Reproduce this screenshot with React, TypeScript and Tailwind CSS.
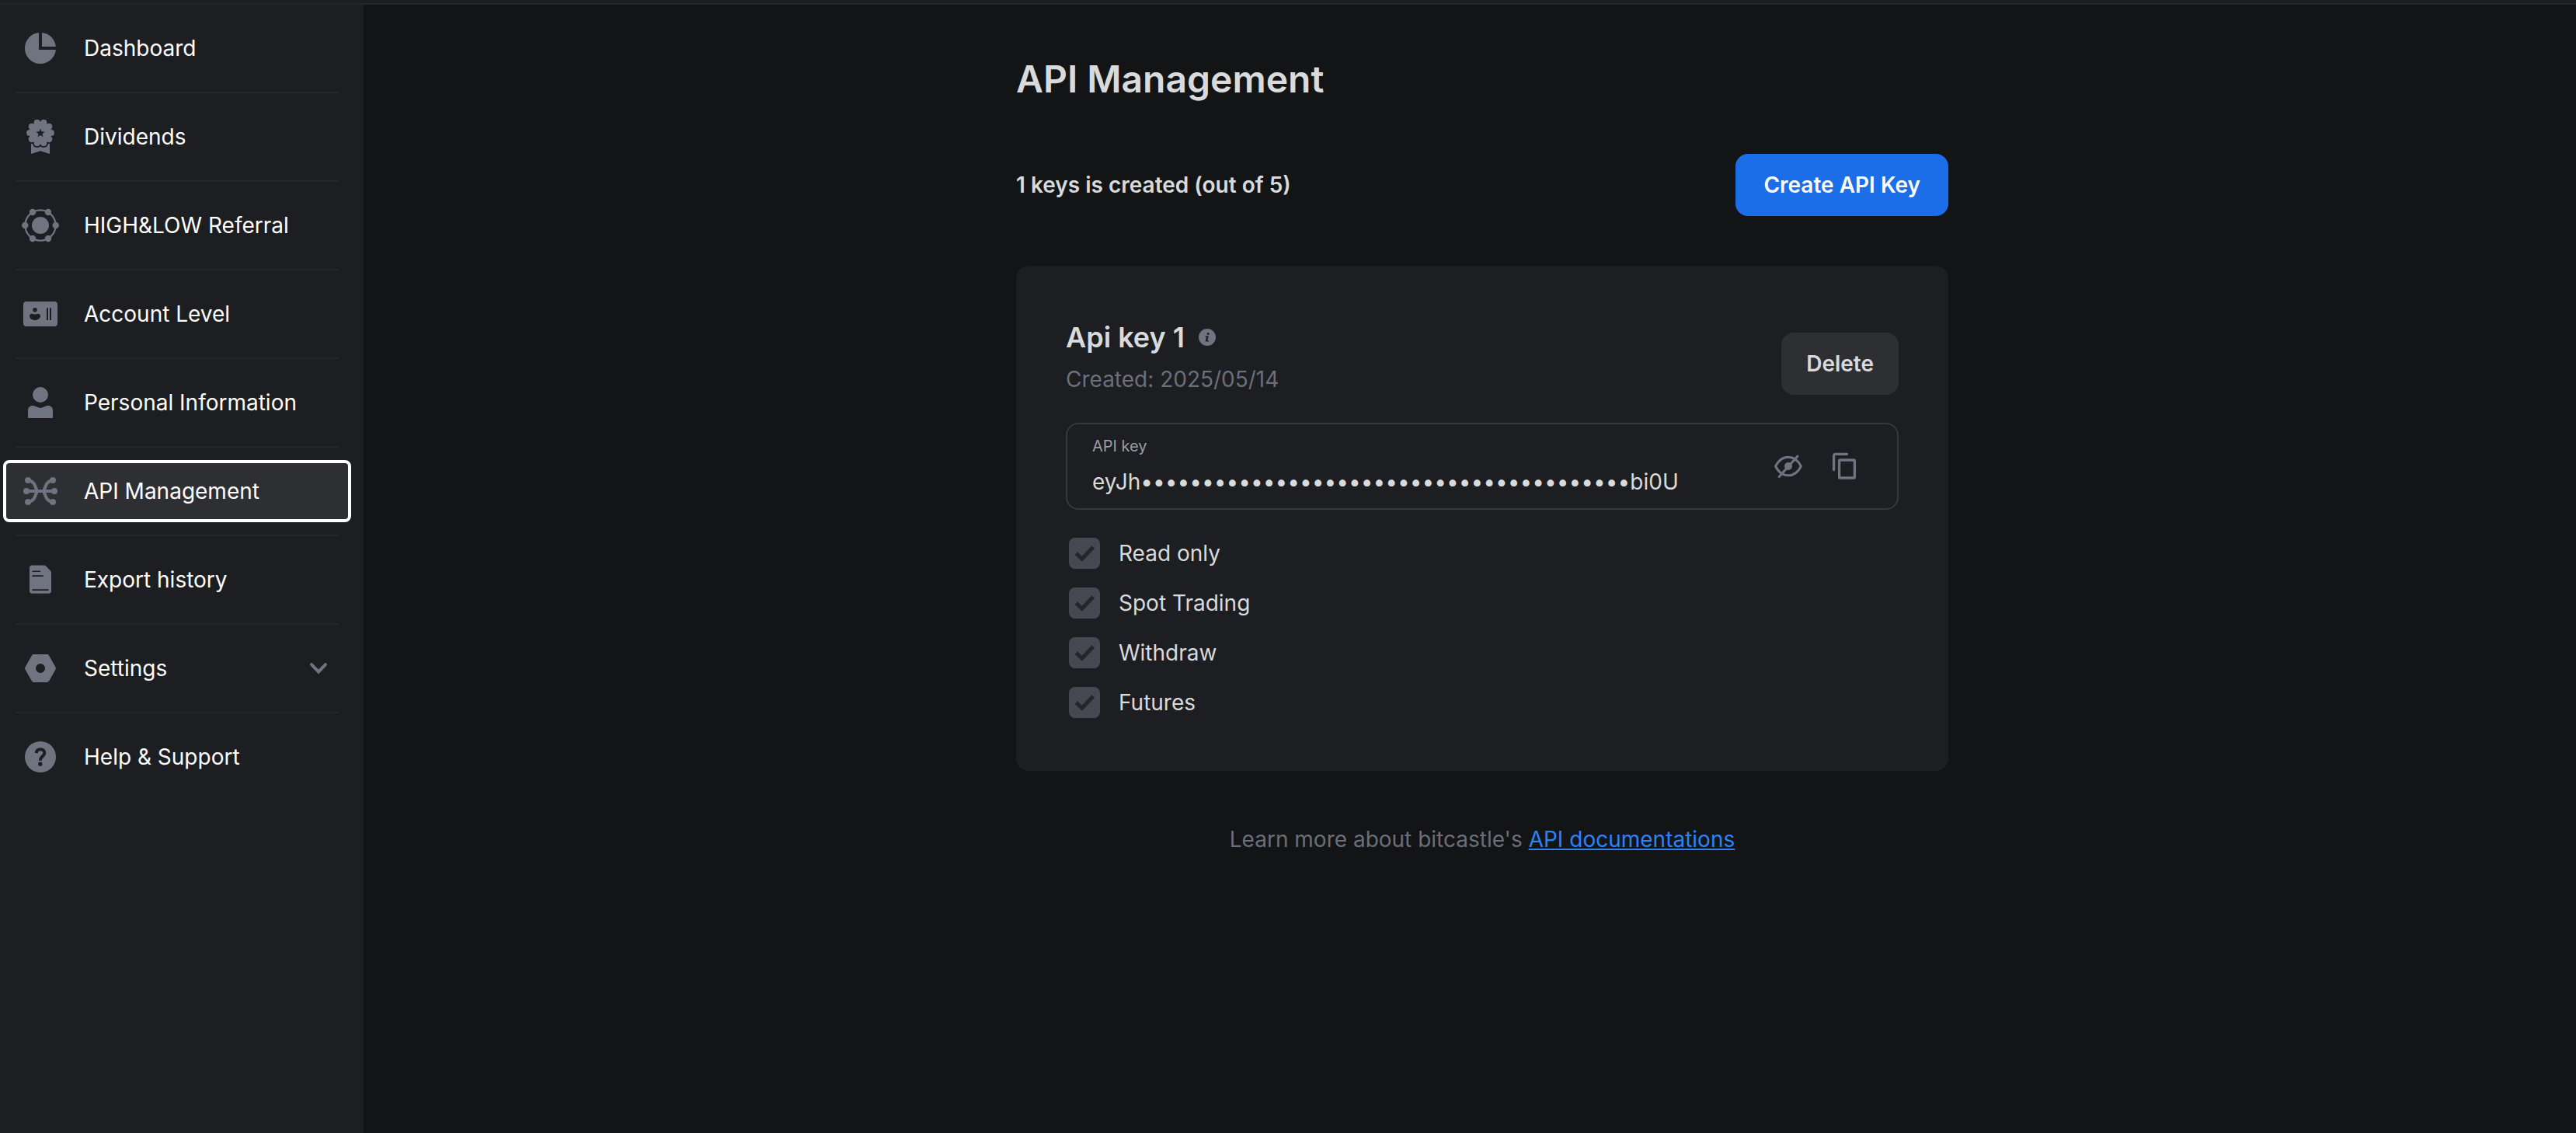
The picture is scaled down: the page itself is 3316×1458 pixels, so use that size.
import type { ReactNode } from "react";

function DashboardIcon() {
  return (
    <>
      <path d="M22 4.1A20 20 0 1 0 43.9 26H22Z" />
      <path d="M26 4.1A20 20 0 0 1 43.9 22H26Z" />
    </>
  );
}

const bumps = Array.from({ length: 10 }, (_, i) => {
  const a = (i * Math.PI) / 5;
  return { x: 24 + 13.8 * Math.cos(a), y: 19 + 13.8 * Math.sin(a) };
});

const star = Array.from({ length: 10 }, (_, i) => {
  const a = -Math.PI / 2 + (i * Math.PI) / 5;
  const r = i % 2 === 0 ? 6 : 2.6;
  return `${(24 + r * Math.cos(a)).toFixed(2)},${(19.4 + r * Math.sin(a)).toFixed(2)}`;
}).join(" ");

function DividendsIcon() {
  return (
    <>
      <path d="M12 32.7H36V46L24 42.3L12 46Z" />
      <g fill="#1d1e22">
        {bumps.map((b, i) => (
          <circle key={i} cx={b.x} cy={b.y} r="6" />
        ))}
      </g>
      <circle cx="24" cy="19" r="14.5" />
      {bumps.map((b, i) => (
        <circle key={i} cx={b.x} cy={b.y} r="4.1" />
      ))}
      <polygon points={star} fill="#1d1e22" />
    </>
  );
}

function ReferralIcon() {
  return (
    <>
      <circle cx="24" cy="24" r="19.6" fill="none" stroke="currentColor" strokeWidth="2.2" />
      <circle cx="24" cy="24" r="11" />
      <circle cx="4.3" cy="24" r="4.2" />
      <circle cx="43.7" cy="24" r="4.2" />
      <circle cx="14" cy="7" r="4.2" />
      <circle cx="34" cy="7" r="4.2" />
      <circle cx="14" cy="41" r="4.2" />
      <circle cx="34" cy="41" r="4.2" />
    </>
  );
}

function AccountIcon() {
  return (
    <>
      <rect x="2" y="8" width="44" height="32" rx="4" />
      <g fill="#1d1e22">
        <circle cx="17" cy="18.7" r="2.8" />
        <path d="M10 26.5C10 25 11.5 23.7 13 23.7C15.5 24.6 18.5 24.6 21 23.7C22.5 23.7 24 25 24 26.5C24 29.5 21 32 17 32S10 29.5 10 26.5Z" />
        <rect x="32" y="16.3" width="2" height="15.7" />
        <rect x="36" y="16.3" width="2" height="15.7" />
      </g>
    </>
  );
}

function PersonIcon() {
  return (
    <>
      <circle cx="24" cy="14" r="10" />
      <path d="M8 44V34C8 30.5 10.5 28 14 28C18 28 20.5 31 24 31S30 28 34 28C37.5 28 40 30.5 40 34V44Z" />
    </>
  );
}

function ApiIcon() {
  return (
    <>
      <g fill="none" stroke="currentColor" strokeWidth="4">
        <path d="M6 24H42" />
        <path d="M8 10.5C15.5 10.5 17 16 19.6 24C17 32 15.5 37.5 8 37.5" />
        <path d="M40 10.5C32.5 10.5 31 16 28.4 24C31 32 32.5 37.5 40 37.5" />
      </g>
      <circle cx="6" cy="24" r="4" />
      <circle cx="42" cy="24" r="4" />
      <circle cx="8" cy="10" r="4" />
      <circle cx="40" cy="10" r="4" />
      <circle cx="8" cy="38" r="4" />
      <circle cx="40" cy="38" r="4" />
    </>
  );
}

function ExportIcon() {
  return (
    <>
      <path d="M13 5.5H28.5C29.6 5.5 30.4 5.8 31.2 6.6L37 12.4C37.7 13.2 38 14 38 15V38.7C38 40.4 36.7 41.7 35 41.7H13C11.3 41.7 10 40.4 10 38.7V8.5C10 6.8 11.3 5.5 13 5.5Z" />
      <path d="M14 13.3H23.5M14 19.1H27.2M14 37.1H34" stroke="#1d1e22" strokeWidth="1.6" strokeLinecap="round" />
    </>
  );
}

function SettingsIcon() {
  return (
    <path
      fillRule="evenodd"
      d="M15.5 6H32.5C33.6 6 34.4 6.5 35 7.4L43.4 22.3C44.1 23.4 44.1 24.6 43.4 25.7L35 40.6C34.4 41.5 33.6 42 32.5 42H15.5C14.4 42 13.6 41.5 13 40.6L4.6 25.7C3.9 24.6 3.9 23.4 4.6 22.3L13 7.4C13.6 6.5 14.4 6 15.5 6ZM24 18A6 6 0 1 0 24 30A6 6 0 1 0 24 18Z"
    />
  );
}

function HelpIcon() {
  return (
    <>
      <circle cx="24" cy="24" r="20" />
      <path d="M18.7 19.2C18.9 16 21 14.2 24 14.2C27.2 14.2 29.3 16.1 29.3 19C29.3 23 23.9 23.2 23.9 28.8" fill="none" stroke="#1d1e22" strokeWidth="4" />
      <circle cx="23.8" cy="33.3" r="2.7" fill="#1d1e22" />
    </>
  );
}

const items: { label: string; icon: ReactNode; active?: boolean; expandable?: boolean }[] = [
  { label: "Dashboard", icon: <DashboardIcon /> },
  { label: "Dividends", icon: <DividendsIcon /> },
  { label: "HIGH&LOW Referral", icon: <ReferralIcon /> },
  { label: "Account Level", icon: <AccountIcon /> },
  { label: "Personal Information", icon: <PersonIcon /> },
  { label: "API Management", icon: <ApiIcon />, active: true },
  { label: "Export history", icon: <ExportIcon /> },
  { label: "Settings", icon: <SettingsIcon />, expandable: true },
  { label: "Help & Support", icon: <HelpIcon /> },
];

function NavItem({ item }: { item: (typeof items)[number] }) {
  const body = (
    <>
      <svg viewBox="0 0 48 48" className="size-12 shrink-0 text-[#6f7480]" fill="currentColor" aria-hidden="true">
        {item.icon}
      </svg>
      <span className="flex-1 text-left">{item.label}</span>
      {item.expandable && (
        <svg viewBox="0 0 24 24" className="size-6 shrink-0 text-[#6f7480]" fill="none" stroke="currentColor" strokeWidth="4" strokeLinecap="round" aria-hidden="true">
          <path d="M3 7.2L12 16.5L21 7.2" />
        </svg>
      )}
    </>
  );
  const base = "flex h-18 w-full items-center gap-8 rounded-sm pr-[26px] pl-5 text-[28px] leading-10 text-white";
  if (item.expandable) {
    return (
      <button type="button" aria-expanded="false" className={base}>
        {body}
      </button>
    );
  }
  return (
    <a
      href="#"
      aria-current={item.active ? "page" : undefined}
      className={item.active ? `${base} bg-[#2e2f33] outline-4 outline-white` : base}
    >
      {body}
    </a>
  );
}

function Permission({ label }: { label: string }) {
  return (
    <label className="flex items-center gap-6 text-[28px] leading-10">
      <span className="grid size-10 place-items-center">
        <input type="checkbox" defaultChecked disabled className="col-start-1 row-start-1 size-10 appearance-none rounded-lg bg-[#474952]" />
        <svg viewBox="0 0 40 40" className="col-start-1 row-start-1 size-10" fill="none" stroke="#25262a" strokeWidth="5" aria-hidden="true">
          <path d="M9.3 20L16.8 27.3L31.2 12" />
        </svg>
      </span>
      {label}
    </label>
  );
}

export default function App() {
  return (
    <div className="flex min-h-screen flex-col bg-[#131416] font-['Inter',sans-serif] text-[#d9dadc]">
      <header className="h-1.5 border-b-2 border-[#25262a] bg-[#1d1e22]" />
      <div className="flex flex-1">
        <nav className="w-[468px] shrink-0 bg-[#1d1e22] pr-5 pl-2" aria-label="Account">
          <ul>
            {items.map((item, i) => (
              <li key={item.label}>
                {i > 0 && <hr className="mx-3 border-t-2 border-[#25262a]" />}
                <div className="py-5">
                  <NavItem item={item} />
                </div>
              </li>
            ))}
          </ul>
        </nav>

        <main className="min-w-0 flex-1 pl-8">
          <div className="mx-auto flex max-w-[1200px] flex-col pt-16">
            <h1 className="text-5xl leading-16 font-semibold">API Management</h1>

            <div className="mt-16 flex items-center justify-between">
              <p className="text-[28px] leading-10 font-semibold">1 keys is created (out of 5)</p>
              <button type="button" className="h-20 rounded-2xl bg-[#1b6de8] px-9 text-[28px] leading-10 font-semibold text-white">
                Create API Key
              </button>
            </div>

            <section className="mt-16 rounded-2xl bg-[#1d1e22] px-16 pt-[68px] pb-[68px]">
              <div className="flex items-end justify-between">
                <div>
                  <div className="flex items-center gap-[18px]">
                    <h2 className="text-4xl leading-12 font-semibold">Api key 1</h2>
                    <svg viewBox="0 0 22 22" className="size-[22px] text-[#6f7480]" fill="currentColor" role="img" aria-label="Key information">
                      <circle cx="11" cy="11" r="11" />
                      <circle cx="12.2" cy="6.5" r="1.5" fill="#1d1e22" />
                      <path d="M8.8 9.6H12.7L11.4 15.2H12.9V16.6H8.6L9.9 11H8.6Z" fill="#1d1e22" />
                    </svg>
                  </div>
                  <p className="mt-2.5 text-[28px] leading-10 text-[#6b6f7b]">Created: 2025/05/14</p>
                </div>
                <button type="button" className="h-20 rounded-2xl bg-[#2e2f33] px-8 text-[28px] leading-10 font-semibold">
                  Delete
                </button>
              </div>

              <div className="mt-9 flex h-28 items-center rounded-2xl border-2 border-[#37383c] pr-12 pl-8">
                <div className="flex flex-1 flex-col">
                  <label htmlFor="api-key" className="text-xl leading-7 text-[#9a9da3]">
                    API key
                  </label>
                  <input
                    id="api-key"
                    type="text"
                    readOnly
                    value={`eyJh${"•".repeat(40)}bi0U`}
                    className="mt-3 h-10 w-full bg-transparent text-[28px] leading-10 outline-none"
                  />
                </div>
                <div className="flex items-center gap-[38px] text-[#6f7480]">
                  <button type="button" aria-label="Show key">
                    <svg viewBox="0 0 36 36" className="size-9" fill="none" stroke="currentColor" strokeWidth="3" strokeLinecap="round" strokeLinejoin="round">
                      <path d="M1.6 18C5 11 10.5 6.2 18 6.2S31 11 34.4 18C31 25 25.5 29.8 18 29.8S5 25 1.6 18Z" />
                      <path d="M6.2 31.5L30 5" />
                      <circle cx="18" cy="18" r="5" fill="currentColor" stroke="none" />
                    </svg>
                  </button>
                  <button type="button" aria-label="Copy key">
                    <svg viewBox="0 0 36 36" className="size-9" fill="none" stroke="currentColor" strokeWidth="3.3" strokeLinecap="round" strokeLinejoin="round">
                      <path d="M19.5 2.3H4.6C3.4 2.3 2.6 3.1 2.6 4.3V22.5" />
                      <rect x="9.6" y="10" width="19.8" height="23" rx="1" />
                    </svg>
                  </button>
                </div>
              </div>

              <div className="mt-9 ml-1 flex flex-col items-start gap-6">
                <Permission label="Read only" />
                <Permission label="Spot Trading" />
                <Permission label="Withdraw" />
                <Permission label="Futures" />
              </div>
            </section>

            <p className="mt-17 text-center text-[28px] leading-10 text-[#6b6f7b]">
              Learn more about bitcastle's{" "}
              <a href="#" className="text-[#2c82f8] underline">
                API documentations
              </a>
            </p>
          </div>
        </main>
      </div>
    </div>
  );
}
